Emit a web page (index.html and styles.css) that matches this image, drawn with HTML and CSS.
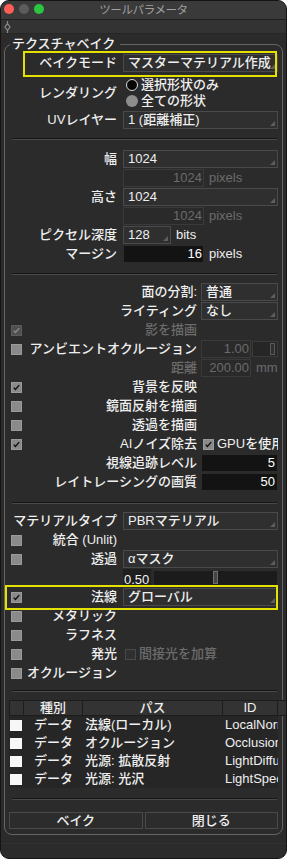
FILE: index.html
```html
<!DOCTYPE html>
<html lang="ja">
<head>
  <meta charset="UTF-8">
  <meta name="viewport" content="width=device-width, initial-scale=1">
  <title>ツールパラメータ</title>
  <link rel="stylesheet" href="styles.css">
</head>
<body>
  <div class="window">
    <div class="titlebar">
      <div class="lights"><span class="light red"></span><span class="light dim"></span><span class="light green"></span></div>
      <div class="title">ツールパラメータ</div>
      <div></div>
    </div>
    <div class="toolstrip">
      <svg class="grip" width="7" height="12" viewBox="0 0 7 12"><path d="M3.5 0v2.5M3.5 9.5V12M3.5 2.5L6 6 3.5 9.5 1 6Z" fill="none" stroke="#8a8a8a" stroke-width="1.2"/></svg>
    </div>

    <fieldset class="group">
      <legend>テクスチャベイク</legend>

      <div class="sec sec-render">
        <div class="row hl hl-bake">
          <span class="lbl">ベイクモード</span>
          <div class="ctl"><div class="select">マスターマテリアル作成</div></div>
        </div>
        <div class="row radios">
          <span class="lbl">レンダリング</span>
          <div class="ctl">
            <div class="radio on"><i></i>選択形状のみ</div>
            <div class="radio"><i></i>全ての形状</div>
          </div>
        </div>
        <div class="row uv">
          <span class="lbl">UVレイヤー</span>
          <div class="ctl"><div class="select">1 (距離補正)</div></div>
        </div>
      </div>
      <div class="sep"></div>

      <div class="sec sec-size">
        <div class="row">
          <span class="lbl">幅</span>
          <div class="ctl"><div class="select">1024</div></div>
        </div>
        <div class="row">
          <span class="lbl"></span>
          <div class="ctl"><div class="field dis">1024</div><span class="unit dis">pixels</span></div>
        </div>
        <div class="row">
          <span class="lbl">高さ</span>
          <div class="ctl"><div class="select">1024</div></div>
        </div>
        <div class="row">
          <span class="lbl"></span>
          <div class="ctl"><div class="field dis">1024</div><span class="unit dis">pixels</span></div>
        </div>
        <div class="row">
          <span class="lbl">ピクセル深度</span>
          <div class="ctl"><div class="select narrow">128</div><span class="unit">bits</span></div>
        </div>
        <div class="row">
          <span class="lbl">マージン</span>
          <div class="ctl"><div class="field dark">16</div><span class="unit">pixels</span></div>
        </div>
      </div>
      <div class="sep"></div>

      <div class="sec sec-b sec-light">
        <div class="row">
          <span class="lbl">面の分割:</span>
          <div class="ctl"><div class="select">普通</div></div>
        </div>
        <div class="row">
          <span class="lbl">ライティング</span>
          <div class="ctl"><div class="select">なし</div></div>
        </div>
        <div class="row">
          <span class="cb on off-state"><svg viewBox="0 0 11 11"><path d="M2.2 5.6l2 2.3L8.8 2.6"/></svg></span>
          <span class="lbl dis">影を描画</span>
          <div class="ctl"></div>
        </div>
        <div class="row">
          <span class="cb"></span>
          <span class="lbl">アンビエントオクルージョン</span>
          <div class="ctl"><div class="field dis short">1.00</div><div class="mini-slider"><span class="thumb"></span></div></div>
        </div>
        <div class="row">
          <span class="lbl dis">距離</span>
          <div class="ctl"><div class="field dis short">200.00</div><span class="unit dis">mm</span></div>
        </div>
        <div class="row">
          <span class="cb on"><svg viewBox="0 0 11 11"><path d="M2.2 5.6l2 2.3L8.8 2.6"/></svg></span>
          <span class="lbl">背景を反映</span>
          <div class="ctl"></div>
        </div>
        <div class="row">
          <span class="cb"></span>
          <span class="lbl">鏡面反射を描画</span>
          <div class="ctl"></div>
        </div>
        <div class="row">
          <span class="cb"></span>
          <span class="lbl">透過を描画</span>
          <div class="ctl"></div>
        </div>
        <div class="row">
          <span class="cb on"><svg viewBox="0 0 11 11"><path d="M2.2 5.6l2 2.3L8.8 2.6"/></svg></span>
          <span class="lbl">AIノイズ除去</span>
          <div class="ctl clip"><span class="cb on inline"><svg viewBox="0 0 11 11"><path d="M2.2 5.6l2 2.3L8.8 2.6"/></svg></span><span class="opt">GPUを使用</span></div>
        </div>
        <div class="row">
          <span class="lbl">視線追跡レベル</span>
          <div class="ctl"><div class="field dark full">5</div></div>
        </div>
        <div class="row">
          <span class="lbl">レイトレーシングの画質</span>
          <div class="ctl"><div class="field dark full">50</div></div>
        </div>
      </div>
      <div class="sep"></div>

      <div class="sec sec-mat">
        <div class="row">
          <span class="lbl">マテリアルタイプ</span>
          <div class="ctl"><div class="select">PBRマテリアル</div></div>
        </div>
        <div class="row">
          <span class="cb"></span>
          <span class="lbl">統合 (Unlit)</span>
          <div class="ctl"></div>
        </div>
        <div class="row">
          <span class="cb"></span>
          <span class="lbl">透過</span>
          <div class="ctl"><div class="select">αマスク</div></div>
        </div>
        <div class="row">
          <span class="lbl"></span>
          <div class="ctl"><div class="field value">0.50</div><div class="slider"><span class="thumb"></span></div></div>
        </div>
        <div class="row hl hl-normal">
          <span class="cb on"><svg viewBox="0 0 11 11"><path d="M2.2 5.6l2 2.3L8.8 2.6"/></svg></span>
          <span class="lbl">法線</span>
          <div class="ctl"><div class="select">グローバル</div></div>
        </div>
        <div class="row">
          <span class="cb"></span>
          <span class="lbl">メタリック</span>
          <div class="ctl"></div>
        </div>
        <div class="row">
          <span class="cb"></span>
          <span class="lbl">ラフネス</span>
          <div class="ctl"></div>
        </div>
        <div class="row">
          <span class="cb"></span>
          <span class="lbl">発光</span>
          <div class="ctl"><span class="cb dis-box inline"></span><span class="opt dis">間接光を加算</span></div>
        </div>
        <div class="row">
          <span class="cb"></span>
          <span class="lbl">オクルージョン</span>
          <div class="ctl"></div>
        </div>
      </div>
      <div class="sep"></div>

      <div class="list">
        <div class="list-head">
          <span></span><span>種別</span><span>パス</span><span>ID</span><span></span>
        </div>
        <div class="list-body">
          <div class="list-row"><span class="wcb"></span><span class="kind">データ</span><span class="path">法線(ローカル)</span><span class="id">LocalNormal</span></div>
          <div class="list-row"><span class="wcb"></span><span class="kind">データ</span><span class="path">オクルージョン</span><span class="id">Occlusion</span></div>
          <div class="list-row"><span class="wcb"></span><span class="kind">データ</span><span class="path">光源: 拡散反射</span><span class="id">LightDiffuse</span></div>
          <div class="list-row"><span class="wcb"></span><span class="kind">データ</span><span class="path">光源: 光沢</span><span class="id">LightSpecular</span></div>
        </div>
      </div>
      <div class="sep"></div>

      <div class="buttons">
        <button class="btn">ベイク</button>
        <button class="btn">閉じる</button>
      </div>
    </fieldset>
    <div class="footer"></div>
  </div>
</body>
</html>
```

FILE: styles.css
```css
*, *::before, *::after {
  box-sizing: border-box;
}
body {
  margin: 0;
  background: #ffffff;
  font-family: "Liberation Sans", "Noto Sans CJK JP", sans-serif;
  font-size: 13px;
  font-weight: 500;
  line-height: 18px;
  color: #efefef;
}
.window {
  width: 287px;
  height: 859px;
  background: #2b2b2b;
  border: 1px solid #141414;
  border-radius: 9px;
  overflow: hidden;
}

/* title bar */
.titlebar {
  display: grid;
  grid-template-columns: 1fr auto 1fr;
  height: 19px;
  background: #3a3a3a;
  border-bottom: 1px solid #1f1f1f;
}
.lights {
  display: flex;
  gap: 5px;
  padding: 3px 0 0 3px;
}
.light {
  width: 10px;
  height: 10px;
  border-radius: 50%;
}
.light.red { background: #fd5f57; }
.light.dim { background: #5c5c5c; }
.light.green { background: #2ac63f; }
.title {
  font-size: 11.5px;
  font-weight: 400;
  line-height: 18px;
  color: #a0a0a0;
  letter-spacing: -0.4px;
}
.toolstrip {
  height: 14px;
  padding: 1px 0 0 3px;
  background: #333333;
  border-bottom: 1px solid #262626;
}
.grip {
  display: block;
}

/* group box */
.group {
  margin: 3px 3px 0;
  padding: 0 4px 5px 5px;
  border: 1px solid #666666;
  border-radius: 8px;
  min-width: 0;
}
.group legend {
  padding: 0 5px 0 2px;
  line-height: 14px;
  color: #f2f2f2;
}
.sep {
  margin: 0 1px 0 2px;
  border-top: 1px solid #151515;
  border-bottom: 1px solid #4a4a4a;
}
.sec {
  display: flex;
  flex-direction: column;
  gap: 1px;
}
.sec-render { padding: 3px 0 9px; }
.sec-size { padding: 10px 0; }
.sec-light { padding: 8px 0 11px; }
.sec-mat { padding: 8px 0; }

/* rows */
.row {
  display: flex;
  align-items: center;
  height: 18px;
  flex: none;
}
.lbl {
  flex: 1;
  min-width: 0;
  padding-right: 6px;
  text-align: right;
  white-space: nowrap;
}
.ctl {
  width: 155px;
  height: 18px;
  flex: none;
  display: flex;
  align-items: center;
}
.sec-b .lbl { padding-right: 4px; }
.sec-b .ctl { width: 77px; }
.ctl.clip { overflow: hidden; }
.dis { color: #6b6b6b; }

.radios {
  height: 32px;
  margin-top: 4px;
}
.radios .ctl {
  height: 32px;
  flex-direction: column;
  align-items: flex-start;
}
.radio {
  display: flex;
  align-items: center;
  height: 16px;
}
.radio i {
  width: 12px;
  height: 12px;
  margin: 0 3px;
  border-radius: 50%;
  background: #8d8d8d;
}
.radio.on i {
  background: #050505;
  border: 1.5px solid #dcdcdc;
}
.uv { margin-top: 1px; }

/* controls */
.select {
  position: relative;
  width: 100%;
  height: 18px;
  padding-left: 4px;
  border: 1px solid #4a4a4a;
  background: #2f2f2f;
  line-height: 16px;
  white-space: nowrap;
  overflow: hidden;
}
.select::after {
  content: "";
  position: absolute;
  right: 2px;
  bottom: 2px;
  border-left: 5px solid transparent;
  border-bottom: 5px solid #5e5e5e;
}
.select.narrow { width: 48px; }
.field {
  width: 81px;
  height: 18px;
  padding-right: 1px;
  border: 1px solid #3a3a3a;
  background: #2a2a2a;
  line-height: 16px;
  text-align: right;
}
.field.dark {
  background: #131313;
  border-color: #2c2c2c;
  color: #ffffff;
}
.field.short { width: 50px; }
.field.full {
  width: 100%;
  padding-right: 2px;
}
.field.value {
  width: 28px;
  padding: 0;
  background: #1f1f1f;
  border-color: #1f1f1f;
  color: #efefef;
  text-align: left;
  line-height: 20px;
}
.unit {
  margin-left: 5px;
}
.mini-slider {
  display: flex;
  justify-content: flex-end;
  width: 26px;
  height: 16px;
  margin-left: 1px;
  padding: 1px 2px;
  border: 1px solid #3a3a3a;
  background: #262626;
}
.mini-slider .thumb {
  width: 5px;
  border: 1px solid #595959;
  background: #303030;
}
.slider {
  display: flex;
  width: 125px;
  height: 17px;
  margin-left: 2px;
  padding-left: 59px;
  border: 1px solid #2c2c2c;
  background: #1b1b1b;
}
.slider .thumb {
  width: 5px;
  height: 13px;
  border: 1px solid #6e6e6e;
  background: #444444;
}

/* check boxes */
.cb {
  display: flex;
  align-items: center;
  justify-content: center;
  flex: none;
  width: 11px;
  height: 11px;
  margin-left: 1px;
  border: 1px solid #9a9a9a;
  background: #8a8a8a;
}
.cb svg {
  width: 9px;
  height: 9px;
  fill: none;
  stroke: #0d0d0d;
  stroke-width: 1.7;
}
.cb.off-state {
  border-color: #5c5c5c;
  background: #4f4f4f;
}
.cb.off-state svg { stroke: #8c8c8c; }
.cb.inline { margin-left: 2px; }
.cb.dis-box {
  border-color: #4a4a4a;
  background: #303030;
}
.opt {
  margin-left: 3px;
  white-space: nowrap;
}

/* highlight frames */
.hl {
  position: relative;
}
.hl::after {
  content: "";
  position: absolute;
  border: 2px solid #e4e000;
  pointer-events: none;
}
.hl-bake::after {
  left: 13px;
  right: 1px;
  top: -3px;
  bottom: -5px;
}
.hl-normal::after {
  left: -5px;
  right: 0;
  top: -3px;
  bottom: -4px;
}

/* list */
.list {
  margin: 8px 0 10px -1px;
}
.list-head {
  display: grid;
  grid-template-columns: 15px 59px 140px 55px 10px;
  height: 16px;
  margin-right: -9px;
  border-top: 1px solid #1c1c1c;
  border-bottom: 1px solid #1c1c1c;
  background: #333333;
}
.list-head span {
  border-right: 1px solid #1c1c1c;
  line-height: 14px;
  text-align: center;
}
.list-head span:first-child {
  border-left: 1px solid #1c1c1c;
}
.list-body {
  background: #262626;
}
.list-row {
  display: grid;
  grid-template-columns: 15px 59px 140px 55px;
  align-items: center;
  height: 18px;
}
.wcb {
  width: 12px;
  height: 11px;
  margin-left: 1px;
  background: #f7f7f7;
}
.kind {
  text-align: center;
}
.path,
.id {
  padding-left: 2px;
  white-space: nowrap;
  overflow: hidden;
}

/* buttons */
.buttons {
  display: flex;
  gap: 2px;
  margin: 12px 0 0 -1px;
}
.btn {
  flex: 1;
  height: 17px;
  padding: 0;
  border: 1px solid #4a4a4a;
  background: #2c2c2c;
  color: #efefef;
  font: inherit;
  line-height: 15px;
}

.footer {
  margin-top: 8px;
  border-top: 1px solid #313131;
}
```
